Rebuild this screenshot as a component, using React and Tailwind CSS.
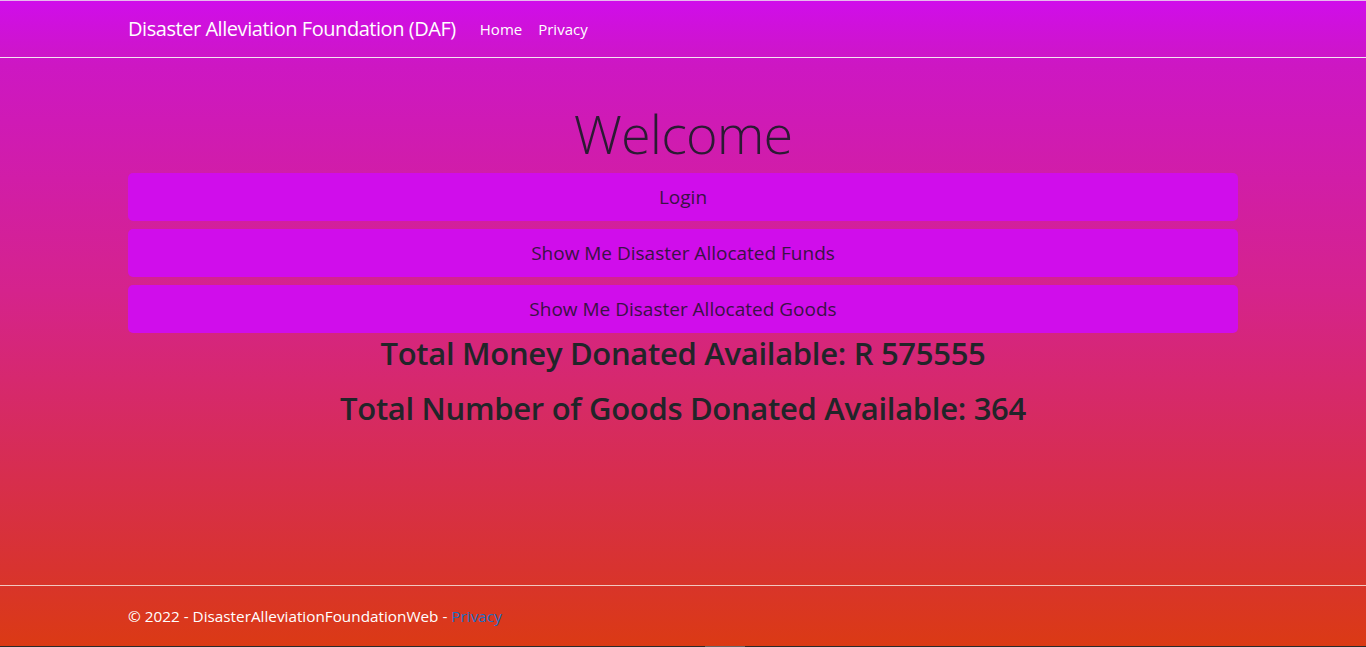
export default function App() {
  const font = { fontFamily: '"Open Sans", "Noto Sans", sans-serif' };
  return (
    <div
      style={font}
      className="h-[647px] w-full flex flex-col bg-[linear-gradient(180deg,#d00deb_0%,#cd17c3_10%,#d5238c_45%,#d8332f_88%,#db3a14_100%)] overflow-hidden"
    >
      <div className="h-px bg-[#e8b8ee]" />
      <header className="h-[57px] border-b border-[#f4e6f2] flex items-center">
        <div className="w-[1110px] mx-auto flex items-center">
          <span className="text-[20px] text-white tracking-[-0.45px]">Disaster Alleviation Foundation (DAF)</span>
          <nav className="flex ml-[16px] text-[15px] text-white">
            <a className="px-2">Home</a>
            <a className="px-2">Privacy</a>
          </nav>
        </div>
      </header>
      <main className="flex-1">
        <div className="w-[1110px] mx-auto text-center">
          <h1 className="mt-[42px] text-[54px] font-light leading-[67px] text-[#2b1a33] tracking-[-0.9px]">Welcome</h1>
          <div className="mt-[6px] flex flex-col gap-[8px]">
            {['Login', 'Show Me Disaster Allocated Funds', 'Show Me Disaster Allocated Goods'].map((t) => (
              <button
                key={t}
                className="h-[48px] w-full rounded-[5px] bg-[#d00deb] text-[19px] text-[#3a1245]"
              >
                {t}
              </button>
            ))}
          </div>
          <h2 className="mt-0 text-[31px] font-semibold leading-[40px] text-[#212529] tracking-[-0.3px]">
            Total Money Donated Available: R 575555
          </h2>
          <h2 className="mt-[15px] text-[31px] font-semibold leading-[40px] text-[#212529] tracking-[-0.3px]">
            Total Number of Goods Donated Available: 364
          </h2>
        </div>
      </main>
      <footer className="h-[61px] border-t border-[#f2c8c0] flex items-center">
        <div className="w-[1110px] mx-auto text-[15.3px] text-white">
          © 2022 - DisasterAlleviationFoundationWeb - <a className="text-[#1b6ec2]">Privacy</a>
        </div>
      </footer>
      <div className="h-px bg-[#2a2a2a] flex">
        <div className="ml-[705px] w-[40px] bg-[#666]" />
      </div>
    </div>
  );
}
